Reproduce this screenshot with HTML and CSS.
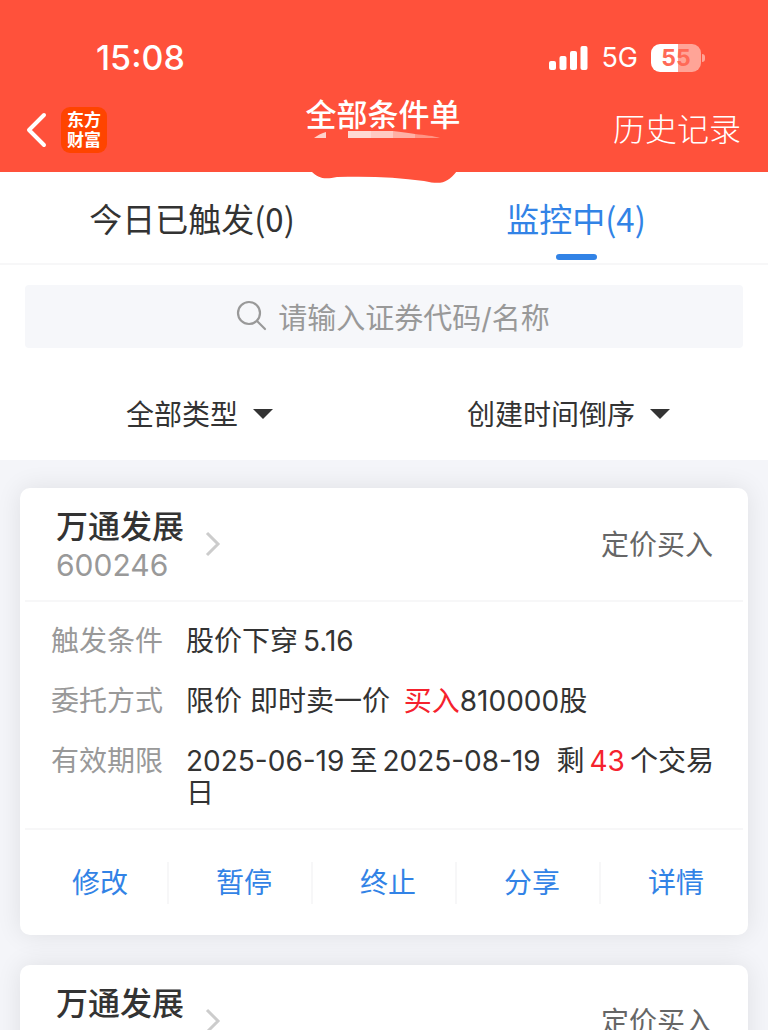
FILE: index.html
```html
<!DOCTYPE html>
<html lang="zh-CN">
<head>
    <meta charset="UTF-8">
    <meta name="viewport" content="width=device-width, initial-scale=1.0">
    <title>全部条件单</title>
    <link rel="stylesheet" href="styles.css">
</head>
<body>
    <div class="app">
        <header class="header">
            <div class="status">
                <span class="clock">15:08</span>
                <div class="status-right">
                    <svg class="signal" width="39" height="26" viewBox="0 0 39 26" fill="#fff">
                        <rect x="0" y="16" width="7" height="9" rx="2"/>
                        <rect x="10.5" y="11" width="7" height="14" rx="2"/>
                        <rect x="21" y="6" width="7" height="19" rx="2"/>
                        <rect x="31.5" y="1" width="7" height="24" rx="2"/>
                    </svg>
                    <span class="network">5G</span>
                    <span class="battery">55</span>
                </div>
            </div>
            <nav class="nav">
                <div class="nav-left">
                    <button class="back" aria-label="返回">
                        <svg width="22" height="36" viewBox="0 0 22 36" fill="none" stroke="#fff" stroke-width="4" stroke-linecap="round" stroke-linejoin="round">
                            <path d="M19 3L4 18l15 15"/>
                        </svg>
                    </button>
                    <span class="logo">东方<br>财富</span>
                </div>
                <h1 class="title">全部条件单</h1>
                <a class="history" href="#">历史记录</a>
            </nav>
            <svg class="smudge" width="160" height="56" viewBox="0 0 160 56">
                <path d="M8 8C12 5 16 3 20 2V8z" fill="#ffd2cb"/>
                <path d="M42 1H65V8H42z" fill="#ffd9d3"/>
                <path d="M65 1H87V8H65z" fill="#ffcbc3"/>
                <path d="M87 1C95 2 103 3 109 4V8H87z" fill="#ffb1a5"/>
                <path d="M109 4C119 5 128 6 134 8H109z" fill="#ff9484"/>
                <path d="M5 41C12 48 18 50 31 47C62 46 91 47 118 51C136 55 141 53 151 41z" fill="#ff513b"/>
            </svg>
        </header>

        <div class="tabs">
            <button class="tab">今日已触发(0)</button>
            <button class="tab active">监控中(4)</button>
        </div>

        <label class="search">
            <svg width="32" height="32" viewBox="0 0 32 32" fill="none" stroke="#999" stroke-width="2.2" stroke-linecap="round">
                <circle cx="13" cy="13" r="11"/>
                <path d="M21 21l8 8"/>
            </svg>
            <input type="text" placeholder="请输入证券代码/名称" aria-label="搜索证券">
        </label>

        <div class="filters">
            <label class="filter">
                <select aria-label="类型">
                    <option>全部类型</option>
                </select>
                <svg width="20" height="12" viewBox="0 0 20 12"><path d="M0 0H20L10 10z" fill="#333"/></svg>
            </label>
            <label class="filter">
                <select aria-label="排序">
                    <option>创建时间倒序</option>
                </select>
                <svg width="20" height="12" viewBox="0 0 20 12"><path d="M0 0H20L10 10z" fill="#333"/></svg>
            </label>
        </div>

        <main class="list">
            <section class="card">
                <div class="card-head">
                    <div>
                        <h2 class="name">万通发展</h2>
                        <div class="code">600246</div>
                    </div>
                    <svg class="arrow" width="16" height="28" viewBox="0 0 16 28" fill="none" stroke="#ccc" stroke-width="3">
                        <path d="M2 2l11 11L2 24"/>
                    </svg>
                    <span class="kind">定价买入</span>
                </div>
                <dl class="details">
                    <dt>触发条件</dt>
                    <dd>股价下穿<span class="num">5.16</span></dd>
                    <dt>委托方式</dt>
                    <dd>限价 即时卖一价 <em class="side">买入</em>810000股</dd>
                    <dt>有效期限</dt>
                    <dd>2025-06-19<span class="num">至</span>2025-08-19&nbsp; 剩<em class="num">43</em>个交易日</dd>
                </dl>
                <div class="actions">
                    <button>修改</button>
                    <button>暂停</button>
                    <button>终止</button>
                    <button>分享</button>
                    <button>详情</button>
                </div>
            </section>

            <section class="card">
                <div class="card-head">
                    <div>
                        <h2 class="name">万通发展</h2>
                        <div class="code">600246</div>
                    </div>
                    <svg class="arrow" width="16" height="28" viewBox="0 0 16 28" fill="none" stroke="#ccc" stroke-width="3">
                        <path d="M2 2l11 11L2 24"/>
                    </svg>
                    <span class="kind">定价买入</span>
                </div>
            </section>
        </main>
    </div>
</body>
</html>
```
FILE: styles.css
```css
:root {
    --red: #ff513b;
    --blue: #3283e6;
    --text: #333;
    --gray: #999;
    --line: #f7f7f8;
    --bg: #f4f5f9;
}
* {
    box-sizing: border-box;
}
body {
    margin: 0;
    font-family: Inter, 'Noto Sans CJK SC', sans-serif;
    font-size: 28px;
    line-height: 32px;
    color: var(--text);
    background: #fff;
}
button, input, select {
    font: inherit;
    color: inherit;
    padding: 0;
    border: none;
    background: none;
    appearance: none;
    outline: none;
}
.app {
    display: flex;
    flex-direction: column;
    height: 100vh;
}

/* header */
.header {
    position: relative;
    flex-shrink: 0;
    padding-top: 30px;
    background: var(--red);
    color: #fff;
}
.status {
    display: flex;
    justify-content: space-between;
    align-items: center;
    height: 56px;
    padding: 0 67px 0 96px;
}
.clock {
    font-size: 34px;
    font-weight: 500;
}
.status-right {
    display: flex;
    align-items: center;
    gap: 13px;
}
.network {
    font-size: 27px;
}
.battery {
    position: relative;
    width: 50px;
    height: 28px;
    border-radius: 9px;
    background: linear-gradient(90deg, #fff 54%, #ffa497 54%);
    color: #ff6a57;
    font-size: 23px;
    font-weight: 700;
    line-height: 28px;
    text-align: center;
}
.battery::after {
    content: '';
    position: absolute;
    top: 10px;
    right: -4px;
    width: 3px;
    height: 8px;
    border-radius: 0 3px 3px 0;
    background: #ffa497;
}
.nav {
    display: grid;
    grid-template-columns: 1fr auto 1fr;
    align-items: center;
    height: 86px;
    padding: 2px 27px 0 25px;
}
.nav-left {
    display: flex;
    align-items: center;
    gap: 14px;
}
.back {
    display: flex;
}
.logo {
    width: 46px;
    height: 46px;
    padding-top: 3px;
    border-radius: 9px;
    background: #ff4400;
    font-size: 17px;
    font-weight: 700;
    line-height: 20px;
    text-align: center;
}
.title {
    margin: 0;
    padding-bottom: 30px;
    font-size: 31px;
    font-weight: 500;
}
.history {
    justify-self: end;
    color: #fff;
    font-size: 32px;
    font-weight: 300;
    text-decoration: none;
}
.smudge {
    position: absolute;
    top: 130px;
    left: calc(50% - 78px);
}

/* tabs */
.tabs {
    display: flex;
    flex-shrink: 0;
    height: 93px;
    border-bottom: 2px solid var(--line);
}
.tab {
    position: relative;
    flex: 1;
    font-family: 'Noto Sans CJK SC', sans-serif;
    font-size: 33px;
}
.tab.active {
    color: var(--blue);
}
.tab.active::after {
    content: '';
    position: absolute;
    bottom: 3px;
    left: calc(50% - 20px);
    width: 41px;
    height: 6px;
    border-radius: 3px;
    background: var(--blue);
}

/* search + filters */
.search {
    display: flex;
    flex-shrink: 0;
    justify-content: center;
    align-items: center;
    gap: 10px;
    height: 63px;
    margin: 20px 25px 0;
    padding: 0 0 2px 18px;
    border-radius: 4px;
    background: #f6f7fa;
}
.search input {
    font-size: 29px;
    field-sizing: content;
}
.search input::placeholder {
    color: var(--gray);
    opacity: 1;
}
.filters {
    display: flex;
    flex-shrink: 0;
    height: 112px;
    padding: 22px 15px 0;
}
.filter {
    display: flex;
    flex: 1;
    justify-content: center;
    align-items: center;
    gap: 14px;
}

/* order cards */
.list {
    display: flex;
    flex: 1;
    flex-direction: column;
    gap: 30px;
    min-height: 0;
    padding: 28px 20px;
    overflow-y: auto;
    scrollbar-width: none;
    background: var(--bg);
}
.card {
    flex-shrink: 0;
    padding: 0 5px;
    border-radius: 10px;
    background: #fff;
    box-shadow: 0 0 26px rgba(0, 0, 0, 0.09);
}
.card-head {
    display: flex;
    align-items: center;
    height: 114px;
    padding: 2px 30px 0 31px;
    border-bottom: 2px solid var(--line);
}
.name {
    margin: 0;
    font-size: 32px;
    font-weight: 500;
    line-height: 40px;
}
.code {
    color: var(--gray);
    font-size: 30px;
    line-height: 36px;
}
.arrow {
    margin-left: 21px;
}
.kind {
    margin-left: auto;
    color: #666;
}
.details {
    display: grid;
    grid-template-columns: 135px 1fr;
    row-gap: 28px;
    margin: 0;
    padding: 23px 12px 19px 26px;
    border-bottom: 2px solid var(--line);
}
.details dt {
    color: var(--gray);
}
.details dd {
    margin: 0;
}
.details em {
    color: #f5222d;
    font-style: normal;
}
.details .side {
    margin-left: 6px;
}
.num {
    margin: 0 5px;
}
.actions {
    display: flex;
    align-items: center;
    height: 105px;
}
.actions button {
    flex: 1;
    height: 42px;
    padding-left: 8px;
    border-right: 2px solid var(--line);
    color: var(--blue);
}
.actions button:last-child {
    border-right: none;
}
```
